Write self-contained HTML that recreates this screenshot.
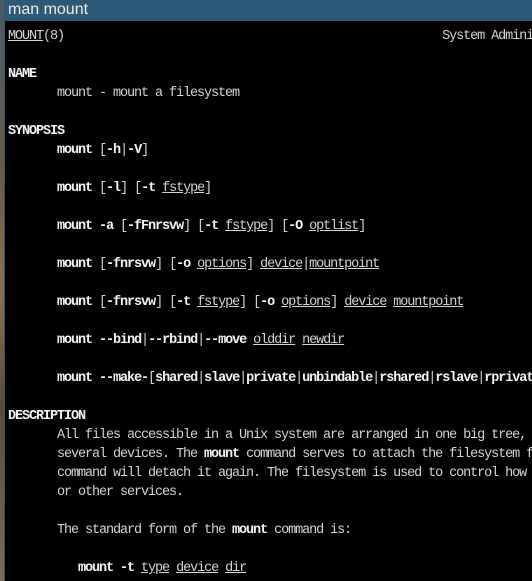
<!DOCTYPE html>
<html><head><meta charset="utf-8"><style>
html,body{margin:0;padding:0;width:532px;height:581px;overflow:hidden;background:#000}
#strip{position:absolute;left:0;top:0;width:4px;height:581px;background:linear-gradient(#4a5a66,#6a5a48 30%,#8a7050 50%,#5a4a3a 70%,#7a6a58)}
#edge{position:absolute;left:4px;top:0;width:1px;height:581px;background:#2c5470}
#title{position:absolute;left:4px;top:0;width:528px;height:21px;background:#2c5a76;color:#e8eef2;font:16px "Liberation Sans","DejaVu Sans",sans-serif;line-height:19px;padding-left:4px;box-sizing:border-box}
#term{position:absolute;left:5px;top:21px;width:527px;height:560px;background:#000;overflow:hidden}
pre{position:absolute;left:3px;top:6px;margin:0;font-family:"Liberation Mono","DejaVu Sans Mono",monospace;font-size:13.5px;letter-spacing:-1.1px;line-height:19px;color:#d4d4d4;white-space:pre}
b{color:#f4f4f4;font-weight:bold}
u{text-decoration:underline}
</style></head><body>
<div id="strip"></div>
<div id="term"><pre><u>MOUNT</u>(8)                                                      System Administration

<b>NAME</b>
       mount - mount a filesystem

<b>SYNOPSIS</b>
       <b>mount</b> [<b>-h</b>|<b>-V</b>]

       <b>mount</b> [<b>-l</b>] [<b>-t</b> <u>fstype</u>]

       <b>mount -a</b> [<b>-fFnrsvw</b>] [<b>-t</b> <u>fstype</u>] [<b>-O</b> <u>optlist</u>]

       <b>mount</b> [<b>-fnrsvw</b>] [<b>-o</b> <u>options</u>] <u>device</u>|<u>mountpoint</u>

       <b>mount</b> [<b>-fnrsvw</b>] [<b>-t</b> <u>fstype</u>] [<b>-o</b> <u>options</u>] <u>device</u> <u>mountpoint</u>

       <b>mount --bind</b>|<b>--rbind</b>|<b>--move</b> <u>olddir</u> <u>newdir</u>

       <b>mount --make-</b>[<b>shared</b>|<b>slave</b>|<b>private</b>|<b>unbindable</b>|<b>rshared</b>|<b>rslave</b>|<b>rprivate</b>]

<b>DESCRIPTION</b>
       All files accessible in a Unix system are arranged in one big tree, the
       several devices. The <b>mount</b> command serves to attach the filesystem found
       command will detach it again. The filesystem is used to control how data
       or other services.

       The standard form of the <b>mount</b> command is:

          <b>mount -t</b> <u>type</u> <u>device</u> <u>dir</u>
</pre></div>
<div id="edge"></div>
<div id="title">man mount</div>
</body></html>
